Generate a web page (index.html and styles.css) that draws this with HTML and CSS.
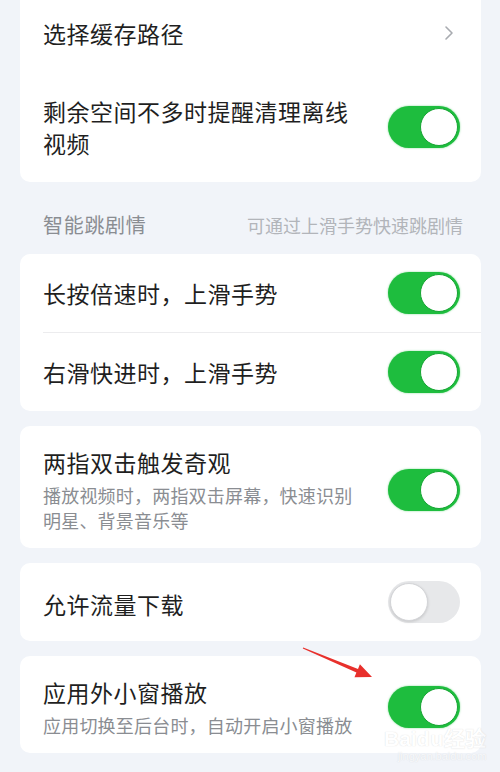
FILE: index.html
```html
<!DOCTYPE html>
<html lang="zh-CN">
<head>
    <meta charset="UTF-8">
    <title>播放设置</title>
    <link rel="stylesheet" href="styles.css">
</head>
<body>
    <div class="page">
        <div class="card card-first">
            <div class="row row-link">
                <div class="label">选择缓存路径</div>
                <svg class="chevron" width="10" height="16" viewBox="0 0 10 16"><path d="M2 2 L8 8 L2 14" fill="none" stroke="#a8abb0" stroke-width="1.6" stroke-linecap="round" stroke-linejoin="round"/></svg>
            </div>
            <div class="row row-tall">
                <div class="text">
                    <div class="label">剩余空间不多时提醒清理离线视频</div>
                </div>
                <div class="switch on"><span class="knob"></span></div>
            </div>
        </div>

        <div class="section-head">
            <span class="section-title">智能跳剧情</span>
            <span class="section-hint">可通过上滑手势快速跳剧情</span>
        </div>

        <div class="card">
            <div class="row row-split">
                <div class="label">长按倍速时，上滑手势</div>
                <div class="switch on"><span class="knob"></span></div>
            </div>
            <div class="row row-split">
                <div class="label">右滑快进时，上滑手势</div>
                <div class="switch on"><span class="knob"></span></div>
            </div>
        </div>

        <div class="card">
            <div class="row row-desc">
                <div class="text">
                    <div class="label">两指双击触发奇观</div>
                    <div class="desc">播放视频时，两指双击屏幕，快速识别明星、背景音乐等</div>
                </div>
                <div class="switch on"><span class="knob"></span></div>
            </div>
        </div>

        <div class="card">
            <div class="row row-single">
                <div class="label">允许流量下载</div>
                <div class="switch"><span class="knob"></span></div>
            </div>
        </div>

        <div class="card">
            <div class="row row-desc">
                <div class="text">
                    <div class="label">应用外小窗播放</div>
                    <div class="desc">应用切换至后台时，自动开启小窗播放</div>
                </div>
                <div class="switch on"><span class="knob"></span></div>
            </div>
        </div>
    </div>

    <svg class="arrow" width="500" height="772" viewBox="0 0 500 772">
        <polygon points="303.2,647.5 358.0,669.0 359.9,664.3 372,677 354.5,677.3 356.4,672.6 302.8,648.5" fill="#e8302c"/>
    </svg>

    <div class="watermark">
        <div class="wm-main">Bai<span class="wm-du">du</span>经验</div>
        <div class="wm-url">jingyan.baidu.com</div>
    </div>
</body>
</html>
```

FILE: styles.css
```css
body { margin: 0; background-color: #f1f4f9; font-family: "Noto Sans CJK SC", "Noto Sans", sans-serif; color: #1f1f1f; }
.page { width: 461px; margin-left: 20px; padding-bottom: 17px; }

.card { background: #fff; border-radius: 10px; margin-top: 15px; overflow: hidden; }
.card-first { margin-top: -7px; border-radius: 0 0 10px 10px; }

.row { display: flex; align-items: center; justify-content: space-between; gap: 30px; padding: 0 21px 0 23px; }
.text { width: 315px; }
.label { font-size: 23px; line-height: 32px; letter-spacing: 0.5px; }
.desc { font-size: 18px; line-height: 25px; letter-spacing: 0.2px; color: #8a8d92; margin-top: 5px; }

.row-link { height: 80px; padding-right: 27px; }
.chevron { display: block; margin-top: 0; }
.row-tall { padding-top: 22px; padding-bottom: 23px; }
.row-split { height: 78px; }
.row-split + .row-split { border-top: 1px solid #ececee; margin-left: 23px; padding-left: 0; }
.row-desc { padding-top: 20px; padding-bottom: 15px; }
.row-single { height: 78px; }
.row-single .label { margin-top: 4px; }

.section-head { display: flex; justify-content: space-between; align-items: center; padding: 29px 18px 0 23px; }
.section-title { font-size: 20px; line-height: 28px; letter-spacing: 0.7px; color: #8a8d92; }
.section-hint { font-size: 18px; line-height: 28px; color: #b2b5ba; }

.switch { flex: none; width: 72px; height: 42px; border-radius: 21px; background: #e7e8ea; position: relative; box-sizing: border-box; }
.switch .knob { position: absolute; top: 2px; left: 2px; width: 38px; height: 38px; border-radius: 50%; background: #fff; box-sizing: border-box; border: 1px solid #d4d5d8; box-shadow: 0 1px 3px rgba(0,0,0,0.15); }
.switch.on { background: #1ebd3e; box-shadow: 0 0 2px rgba(30,189,62,0.6); }
.switch.on .knob { left: auto; right: 2px; border: 1.5px solid #17a534; box-shadow: none; }

.arrow { position: absolute; top: 0; left: 0; pointer-events: none; }

.watermark { position: absolute; left: 384px; top: 728px; text-align: right; opacity: 0.5; }
.wm-main { font-family: "Liberation Sans", sans-serif; font-size: 21px; line-height: 22px; font-weight: bold; color: #fff; text-shadow: 0 0 1px #b0b0b0; }
.wm-du { letter-spacing: 1px; }
.wm-url { font-family: "Liberation Sans", sans-serif; font-size: 11px; color: #fff; text-shadow: 0 0 1px #bbb; }
```
